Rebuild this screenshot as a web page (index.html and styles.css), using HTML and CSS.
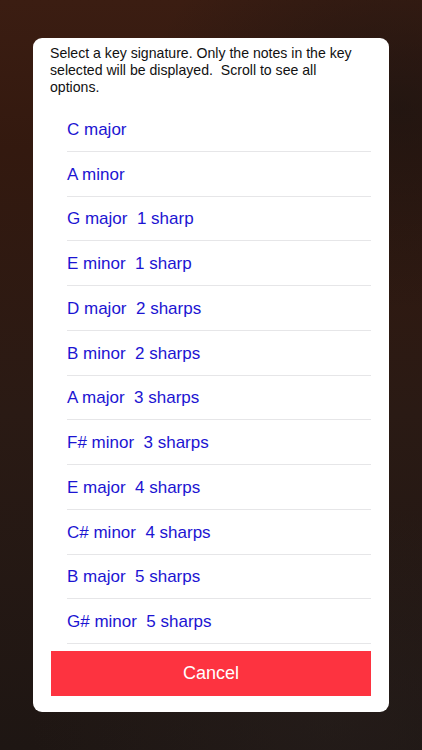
FILE: index.html
```html
<!DOCTYPE html>
<html>
<head>
<meta charset="utf-8">
<link rel="stylesheet" href="styles.css">
</head>
<body>
<div class="screen">
  <div class="card">
    <p class="prompt">Select a key signature. Only the notes in the key selected will be displayed.&nbsp; Scroll to see all options.</p>
    <ul class="keys">
      <li>C major</li>
      <li>A minor</li>
      <li>G major  1 sharp</li>
      <li>E minor  1 sharp</li>
      <li>D major  2 sharps</li>
      <li>B minor  2 sharps</li>
      <li>A major  3 sharps</li>
      <li>F# minor  3 sharps</li>
      <li>E major  4 sharps</li>
      <li>C# minor  4 sharps</li>
      <li>B major  5 sharps</li>
      <li>G# minor  5 sharps</li>
    </ul>
    <div class="cancel">Cancel</div>
  </div>
</div>
</body>
</html>
```
FILE: styles.css
```css
html, body {
  margin: 0;
  padding: 0;
}
body {
  width: 422px;
  height: 750px;
  overflow: hidden;
  font-family: "Liberation Sans", Arial, sans-serif;
}
.screen {
  height: 750px;
  box-sizing: border-box;
  padding-top: 38px;
  background:
    radial-gradient(ellipse 260px 200px at 400px 110px, rgba(20,18,18,0.55), rgba(20,18,18,0) 100%),
    radial-gradient(ellipse 300px 220px at 330px 720px, rgba(40,32,30,0.5), rgba(40,32,30,0) 100%),
    linear-gradient(180deg, #3b1d12 0%, #33190f 20%, #2a1a14 55%, #1e1613 100%);
}
.card {
  margin: 0 33px;
  background: #ffffff;
  border-radius: 9px;
  padding: 7px 0 16px 0;
}
.prompt {
  margin: 0 28px 11px 17px;
  font-size: 14.1px;
  line-height: 17px;
  color: #111111;
}
.keys {
  list-style: none;
  margin: 0 18px 0 34px;
  padding: 0;
}
.keys li {
  box-sizing: border-box;
  height: 44.75px;
  display: flex;
  align-items: center;
  border-bottom: 1px solid #e6e6e8;
  font-size: 17px;
  color: #1c14d2;
  white-space: pre;
  padding-top: 2px;
}
.cancel {
  margin: 7px 18px 0 18px;
  height: 45px;
  background: #fd3340;
  color: #ffffff;
  font-size: 18px;
  display: flex;
  align-items: center;
  justify-content: center;
}
```
